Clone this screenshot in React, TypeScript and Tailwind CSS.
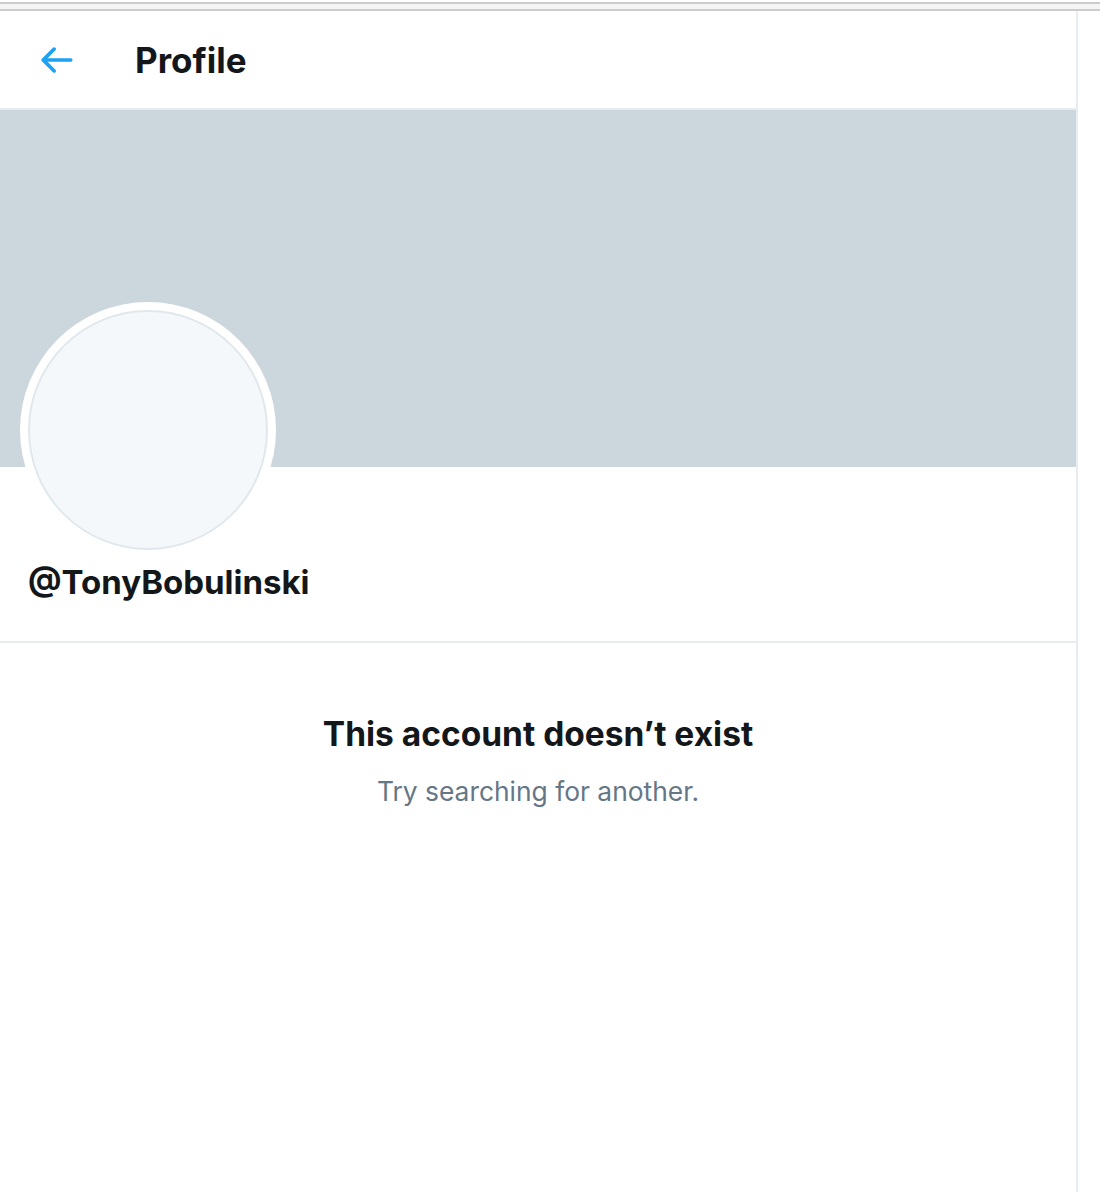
import React from 'react';

const font = {fontFamily: 'Inter, "Noto Sans", sans-serif'};

const BackArrow: React.FC = () => (
	<svg viewBox="0 0 24 24" className="w-[44px] h-[44px] fill-[#1da1f2]">
		<path d="M20 11H7.414l4.293-4.293c.39-.39.39-1.023 0-1.414s-1.023-.39-1.414 0l-6 6c-.39.39-.39 1.023 0 1.414l6 6c.195.195.45.293.707.293s.512-.098.707-.293c.39-.39.39-1.023 0-1.414L7.414 13H20c.553 0 1-.447 1-1s-.447-1-1-1z" />
	</svg>
);

export default function App() {
	return (
		<div className="w-[1100px] min-h-[1192px] bg-white flex flex-col" style={font}>
			{/* browser chrome strip */}
			<div className="h-[2px] bg-white" />
			<div className="h-[2px] bg-[#cccccc]" />
			<div className="h-[5px] bg-[#f5f5f5]" />
			<div className="h-[2px] bg-[#cccccc]" />

			<main className="w-[1078px] flex-1 border-r-2 border-[#e6ecf0] flex flex-col">
				<header className="h-[99px] flex items-center border-b-2 border-[#e6ecf0]">
					<div className="ml-[34px] w-[44px] flex items-center">
						<BackArrow />
					</div>
					<h2 className="ml-[57px] text-[35px] leading-[40px] font-bold text-[#14171a]">Profile</h2>
				</header>

				<div className="h-[357px] bg-[#ccd6dd]" />

				<section className="border-b-2 border-[#e6ecf0] pl-5 pb-[39px]">
					<div className="-mt-[165px] w-[256px] h-[256px] rounded-full bg-white p-2">
						<div className="w-full h-full rounded-full border-2 border-[#e1e8ed] bg-[#f5f8fa]" />
					</div>
					<div className="ml-2 mt-1 text-[33px] leading-[40px] font-bold text-[#14171a]">@TonyBobulinski</div>
				</section>

				<section className="flex flex-col items-center text-center pt-[71px]">
					<h1 className="text-[33.5px] leading-[40px] font-bold text-[#14171a]">This account doesn’t exist</h1>
					<p className="mt-[21px] text-[26.4px] leading-[32px] text-[#657786]">Try searching for another.</p>
				</section>
			</main>
		</div>
	);
}
